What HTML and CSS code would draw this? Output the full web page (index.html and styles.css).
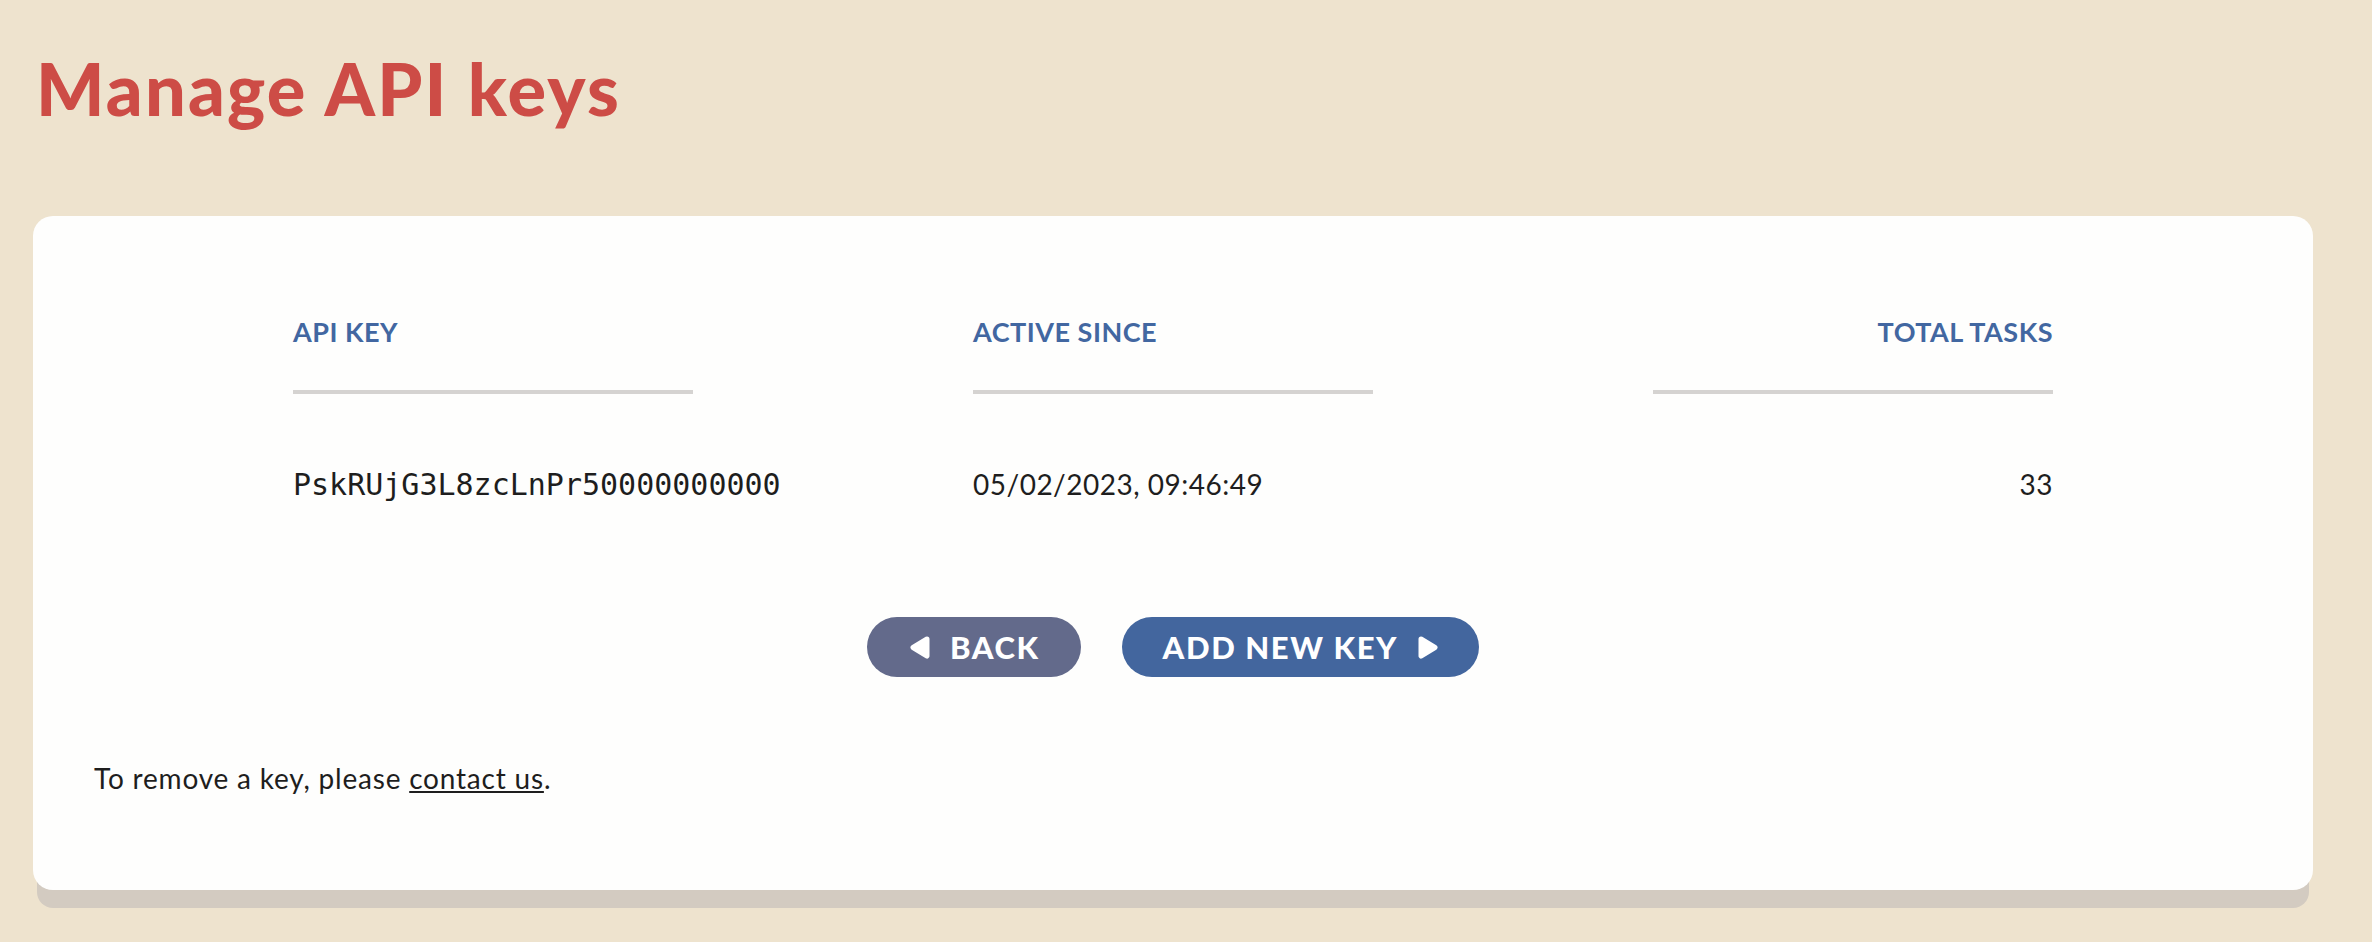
FILE: index.html
```html
<!DOCTYPE html>
<html lang="en">
<head>
    <meta charset="UTF-8">
    <title>Manage API keys</title>
    <link rel="stylesheet" href="styles.css">
</head>
<body>
    <div id="page">
        <h1 class="title">Manage API keys</h1>
        <div class="card">
            <div class="keys">
                <div class="th">API Key</div>
                <div class="th">Active since</div>
                <div class="th right">Total tasks</div>
                <div class="td mono">PskRUjG3L8zcLnPr50000000000</div>
                <div class="td">05/02/2023, 09:46:49</div>
                <div class="td right">33</div>
            </div>
            <div class="actions">
                <a class="btn back" href="#">
                    <svg width="20" height="23" viewBox="0 0 20 23"><path d="M17 3 L3 11.5 L17 20 Z" fill="#fff" stroke="#fff" stroke-width="5" stroke-linejoin="round"/></svg>
                    <span>Back</span>
                </a>
                <a class="btn add" href="#">
                    <span>Add new key</span>
                    <svg width="20" height="23" viewBox="0 0 20 23"><path d="M3 3 L17 11.5 L3 20 Z" fill="#fff" stroke="#fff" stroke-width="5" stroke-linejoin="round"/></svg>
                </a>
            </div>
            <p class="note">To remove a key, please <a href="#">contact us</a>.</p>
        </div>
    </div>
</body>
</html>
```

FILE: styles.css
```css
*{
    padding: 0;
    margin: 0;
    box-sizing: border-box;
}
body{
    background: #eee3ce;
    font-family: Lato, "Open Sans", sans-serif;
    color: #1e1e1e;
}
#page{
    padding: 0 59px 60px 33px;
}
.title{
    padding-top: 52px;
    padding-left: 3px;
    font-size: 72px;
    line-height: 72px;
    font-weight: 900;
    color: #cd4c46;
    letter-spacing: 2.2px;
}
.card{
    margin-top: 92px;
    background: #fefefd;
    border-radius: 20px;
    box-shadow: 0 22px 0 -4px #d3cbc1;
    padding: 100px 61px 96px;
}
.keys{
    width: 1760px;
    margin: 0 auto;
    display: grid;
    grid-template-columns: repeat(3, 400px);
    justify-content: space-between;
    align-items: baseline;
}
.keys .th{
    font-size: 27px;
    line-height: 32px;
    font-weight: 700;
    letter-spacing: 0.5px;
    text-transform: uppercase;
    color: #4267a1;
    padding-bottom: 42px;
    border-bottom: 4px solid #d5d3d1;
}
.keys .td{
    font-size: 28px;
    line-height: 32px;
    letter-spacing: 0.5px;
    padding-top: 74px;
}
.keys .mono{
    font-family: "DejaVu Sans Mono", monospace;
    font-size: 30px;
    letter-spacing: 0;
}
.keys .right{
    text-align: right;
}
.actions{
    margin-top: 116px;
    display: flex;
    justify-content: center;
    gap: 41px;
}
.btn{
    display: flex;
    align-items: center;
    gap: 20px;
    height: 60px;
    padding: 0 41px;
    border-radius: 30px;
    color: #fff;
    text-decoration: none;
    text-transform: uppercase;
    font-size: 31px;
    font-weight: 900;
    letter-spacing: 1.6px;
}
.btn.back{
    background: #636a8b;
    padding-left: 43px;
}
.btn.add{
    background: #43669e;
}
.note{
    margin-top: 85px;
    font-size: 28px;
    line-height: 32px;
    letter-spacing: 0.8px;
}
.note a{
    color: #1e1e1e;
}
```
